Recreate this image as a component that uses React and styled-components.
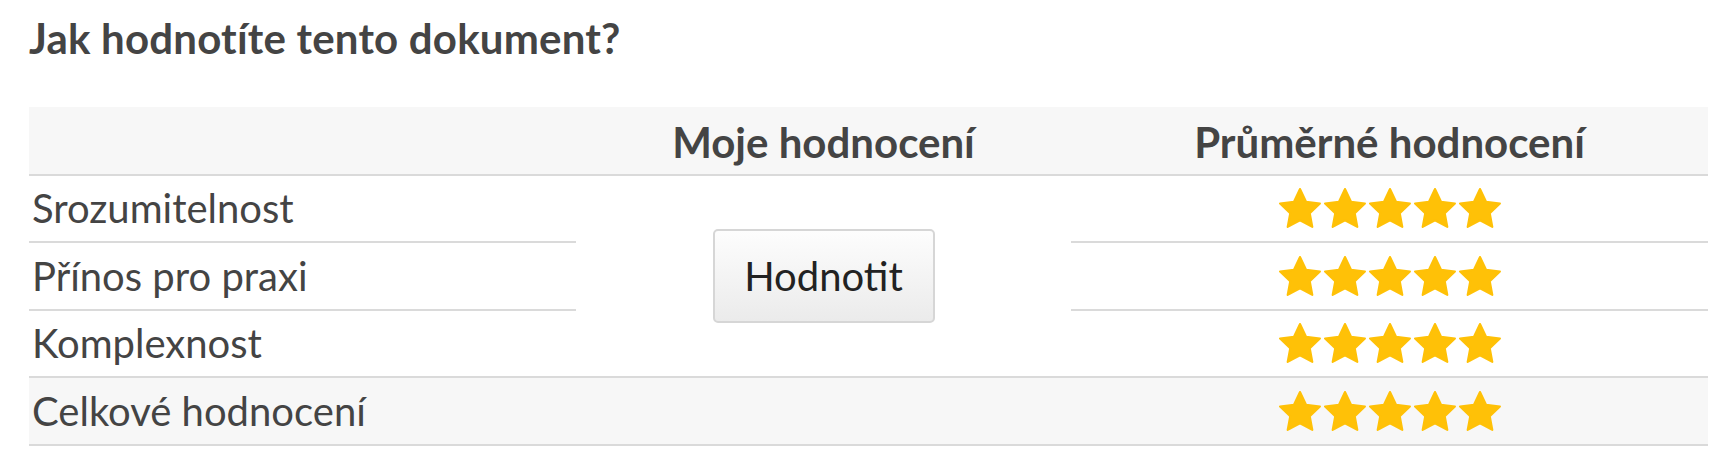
import React from 'react'
import styled, { createGlobalStyle } from 'styled-components'

const GlobalStyle = createGlobalStyle`
  body {
    margin: 0;
    background: #fff;
    font-family: Lato, "Open Sans", sans-serif;
    color: #444;
  }
`

const Page = styled.div`
  padding: 14px 21px 0 29px;
`

const Title = styled.h3`
  margin: 0 0 45px;
  font-size: 42px;
  line-height: 48px;
  letter-spacing: 0.2px;
  font-weight: 700;
  color: #444;
`

const Grid = styled.div`
  display: grid;
  grid-template-columns: 547px 495px 1fr;
  grid-template-rows: 68.5px repeat(4, 67.5px);
`

const HeadCell = styled.div`
  display: flex;
  align-items: center;
  justify-content: center;
  padding-top: 3px;
  background: #f7f7f7;
  border-bottom: 2px solid #dadada;
  font-size: 42px;
  font-weight: 700;
  color: #444;
`

const Cell = styled.div`
  display: flex;
  align-items: center;
  justify-content: ${p => (p.$center ? 'center' : 'flex-start')};
  padding-left: ${p => (p.$center ? '0' : '3px')};
  background: ${p => (p.$shaded ? '#f7f7f7' : 'transparent')};
  border-bottom: 2px solid #dadada;
  font-size: 40px;
  line-height: 48px;
  color: #444;
`

const ButtonCell = styled.div`
  grid-row: span 3;
  display: flex;
  align-items: center;
  justify-content: center;
  border-bottom: 2px solid #dadada;
`

const RateButton = styled.button`
  width: 222px;
  height: 94px;
  padding: 0;
  border: 2px solid #d6d6d6;
  border-radius: 5px;
  background: linear-gradient(to bottom, #fdfdfd 0%, #ebebeb 100%);
  font-family: Lato, "Open Sans", sans-serif;
  font-size: 40px;
  color: #222;
  cursor: pointer;
`

const Stars = styled.div`
  display: flex;
  gap: 3px;
`

const starPoints = (() => {
  const R = 10
  const r = 4.9
  const pts = []
  for (let i = 0; i < 10; i++) {
    const rad = i % 2 === 0 ? R : r
    const a = (Math.PI / 5) * i - Math.PI / 2
    pts.push(`${(rad * Math.cos(a)).toFixed(3)},${(rad * Math.sin(a)).toFixed(3)}`)
  }
  return pts.join(' ')
})()

const Star = () => (
  <svg width="42" height="40" viewBox="-10.01 -10.5 20.02 19.09">
    <polygon
      points={starPoints}
      fill="#ffc107"
      stroke="#ffc107"
      strokeWidth="1"
      strokeLinejoin="round"
    />
  </svg>
)

const FiveStars = () => (
  <Stars>
    {[0, 1, 2, 3, 4].map(i => <Star key={i} />)}
  </Stars>
)

const criteria = ['Srozumitelnost', 'Přínos pro praxi', 'Komplexnost']

const App = () => {
  return (
    <Page>
      <GlobalStyle />
      <Title>Jak hodnotíte tento dokument?</Title>
      <Grid>
        <HeadCell />
        <HeadCell>Moje hodnocení</HeadCell>
        <HeadCell>Průměrné hodnocení</HeadCell>

        {criteria.map((name, i) => (
          <React.Fragment key={name}>
            <Cell>{name}</Cell>
            {i === 0 && (
              <ButtonCell>
                <RateButton>Hodnotit</RateButton>
              </ButtonCell>
            )}
            <Cell $center>
              <FiveStars />
            </Cell>
          </React.Fragment>
        ))}

        <Cell $shaded>Celkové hodnocení</Cell>
        <Cell $shaded />
        <Cell $shaded $center>
          <FiveStars />
        </Cell>
      </Grid>
    </Page>
  )
}

export default App
